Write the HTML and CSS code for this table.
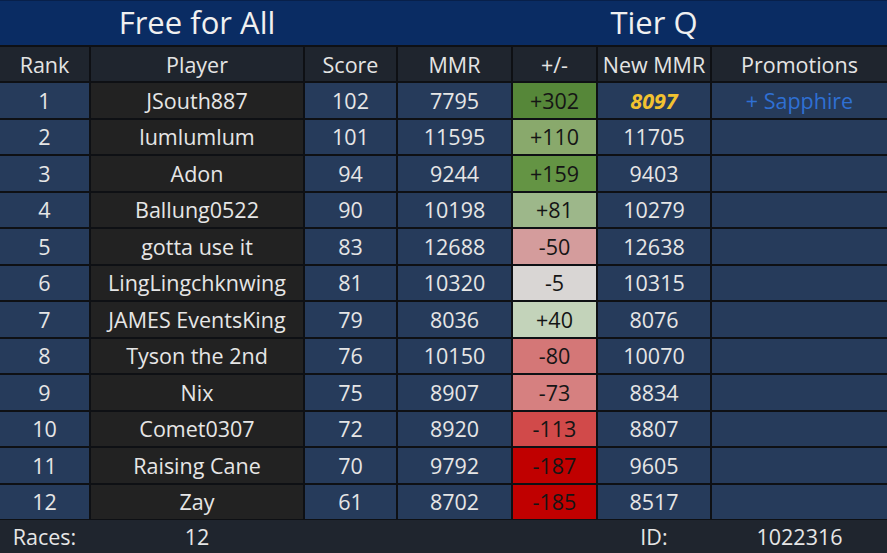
FILE: index.html
```html
<!DOCTYPE html>
<html>
<head>
<meta charset="utf-8">
<link rel="stylesheet" href="styles.css">
</head>
<body>
<div class="board">
  <div class="title cols">
    <div></div><div class="ttl">Free for All</div><div></div><div></div><div></div><div class="ttl">Tier Q</div><div></div>
  </div>
  <div class="table cols">
    <div class="h">Rank</div><div class="h">Player</div><div class="h">Score</div><div class="h">MMR</div><div class="h">+/-</div><div class="h">New MMR</div><div class="h">Promotions</div>

    <div class="c">1</div><div class="c p">JSouth887</div><div class="c">102</div><div class="c">7795</div><div class="c d g1">+302</div><div class="c gold">8097</div><div class="c promo">+ Sapphire</div>
    <div class="c">2</div><div class="c p">lumlumlum</div><div class="c">101</div><div class="c">11595</div><div class="c d g3">+110</div><div class="c">11705</div><div class="c"></div>
    <div class="c">3</div><div class="c p">Adon</div><div class="c">94</div><div class="c">9244</div><div class="c d g2">+159</div><div class="c">9403</div><div class="c"></div>
    <div class="c">4</div><div class="c p">Ballung0522</div><div class="c">90</div><div class="c">10198</div><div class="c d g4">+81</div><div class="c">10279</div><div class="c"></div>
    <div class="c">5</div><div class="c p">gotta use it</div><div class="c">83</div><div class="c">12688</div><div class="c d r1">-50</div><div class="c">12638</div><div class="c"></div>
    <div class="c">6</div><div class="c p">LingLingchknwing</div><div class="c">81</div><div class="c">10320</div><div class="c d n0">-5</div><div class="c">10315</div><div class="c"></div>
    <div class="c">7</div><div class="c p">JAMES EventsKing</div><div class="c">79</div><div class="c">8036</div><div class="c d g5">+40</div><div class="c">8076</div><div class="c"></div>
    <div class="c">8</div><div class="c p">Tyson the 2nd</div><div class="c">76</div><div class="c">10150</div><div class="c d r3">-80</div><div class="c">10070</div><div class="c"></div>
    <div class="c">9</div><div class="c p">Nix</div><div class="c">75</div><div class="c">8907</div><div class="c d r2">-73</div><div class="c">8834</div><div class="c"></div>
    <div class="c">10</div><div class="c p">Comet0307</div><div class="c">72</div><div class="c">8920</div><div class="c d r4">-113</div><div class="c">8807</div><div class="c"></div>
    <div class="c">11</div><div class="c p">Raising Cane</div><div class="c">70</div><div class="c">9792</div><div class="c d r5">-187</div><div class="c">9605</div><div class="c"></div>
    <div class="c">12</div><div class="c p">Zay</div><div class="c">61</div><div class="c">8702</div><div class="c d r5">-185</div><div class="c">8517</div><div class="c"></div>
  </div>
  <div class="foot cols">
    <div>Races:</div><div>12</div><div></div><div></div><div></div><div>ID:</div><div>1022316</div>
  </div>
</div>
</body>
</html>
```
FILE: styles.css
```css
html, body {
  margin: 0;
  padding: 0;
  background: #1f252e;
}
body {
  width: 887px;
  height: 553px;
  overflow: hidden;
  font-family: "Open Sans", "Noto Sans", sans-serif;
  color: #e6e6e6;
}
.board {
  display: flex;
  flex-direction: column;
  width: 887px;
}
.cols {
  display: grid;
  grid-template-columns: 89px 212px 91px 113px 83px 112px 175px;
  column-gap: 2px;
}
.title {
  height: 45px;
  background: #0a2c63;
  border-top: 1px solid #08204a;
  box-sizing: border-box;
}
.ttl {
  display: flex;
  align-items: center;
  justify-content: center;
  font-size: 31px;
  color: #f0f0f0;
  white-space: nowrap;
  padding-bottom: 3px;
}
.table {
  background: #0e1014;
  row-gap: 2px;
  padding-top: 2px;
  padding-bottom: 1px;
  grid-template-rows: 34px repeat(12, 34.5px);
}
.h, .c {
  display: flex;
  align-items: center;
  justify-content: center;
  font-size: 21.5px;
  white-space: nowrap;
}
.h {
  background: #1f252e;
  color: #e4e4e4;
}
.c {
  background: #263b5b;
}
.c.p {
  background: #222222;
}
.d {
  color: #151515;
}
.g1 { background: #568739; }
.g2 { background: #649444; }
.g3 { background: #89a96c; }
.g4 { background: #9db78a; }
.g5 { background: #c3d3ba; }
.n0 { background: #d9d6d4; }
.r1 { background: #d49c9c; }
.r2 { background: #d68080; }
.r3 { background: #d47777; }
.r4 { background: #d14a4a; }
.r5 { background: #c00000; }
.gold {
  color: #f2c230;
  font-style: italic;
  font-weight: 700;
}
.promo {
  color: #2f70d4;
}
.foot {
  height: 33px;
  background: #1f252e;
  font-size: 21.5px;
}
.foot > div {
  display: flex;
  align-items: center;
  justify-content: center;
}
```
